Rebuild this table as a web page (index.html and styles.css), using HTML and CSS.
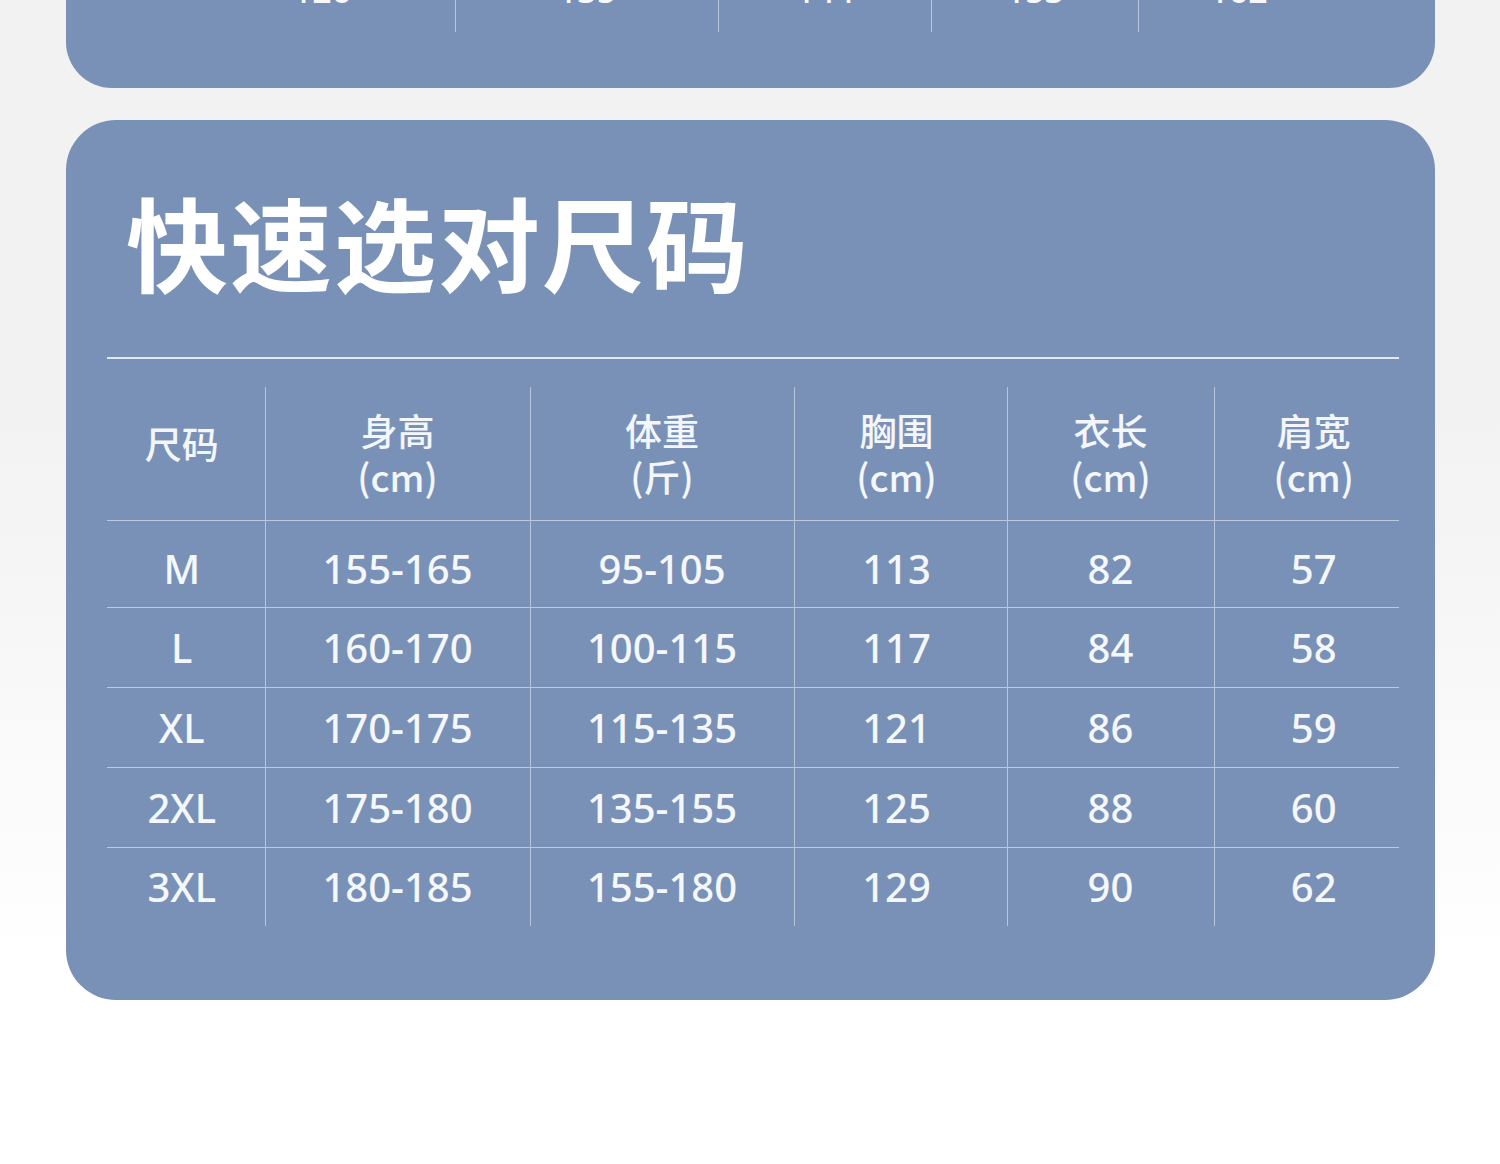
FILE: index.html
```html
<!DOCTYPE html>
<html lang="zh-CN">
<head>
<meta charset="utf-8">
<title>快速选对尺码</title>
<link rel="stylesheet" href="styles.css">
</head>
<body>
<div class="page">
  <section class="card card-top">
    <div class="top-row">
      <div class="top-spacer"></div>
      <div class="top-cell">126</div>
      <div class="top-cell sep">135</div>
      <div class="top-cell sep">144</div>
      <div class="top-cell sep">153</div>
      <div class="top-cell sep">162</div>
    </div>
  </section>

  <section class="card card-main">
    <h1 class="title">快速选对尺码</h1>
    <div class="rule"></div>
    <table class="size-table">
      <colgroup>
        <col class="c1"><col class="c2"><col class="c3"><col class="c4"><col class="c5"><col class="c6">
      </colgroup>
      <thead>
        <tr>
          <th class="single">尺码</th>
          <th>身高<br>(cm)</th>
          <th>体重<br>(斤)</th>
          <th>胸围<br>(cm)</th>
          <th>衣长<br>(cm)</th>
          <th>肩宽<br>(cm)</th>
        </tr>
      </thead>
      <tbody>
        <tr class="r1"><td>M</td><td>155-165</td><td>95-105</td><td>113</td><td>82</td><td>57</td></tr>
        <tr><td>L</td><td>160-170</td><td>100-115</td><td>117</td><td>84</td><td>58</td></tr>
        <tr><td>XL</td><td>170-175</td><td>115-135</td><td>121</td><td>86</td><td>59</td></tr>
        <tr><td>2XL</td><td>175-180</td><td>135-155</td><td>125</td><td>88</td><td>60</td></tr>
        <tr class="last"><td>3XL</td><td>180-185</td><td>155-180</td><td>129</td><td>90</td><td>62</td></tr>
      </tbody>
    </table>
  </section>
</div>
</body>
</html>
```

FILE: styles.css
```css
html, body {
  margin: 0;
  padding: 0;
}

body {
  width: 1500px;
  height: 1164px;
  overflow: hidden;
  background: linear-gradient(to bottom, #f2f2f2 0px, #f2f2f2 420px, #fbfbfb 800px, #ffffff 960px, #ffffff 100%);
  font-family: "Noto Sans", "Noto Sans CJK SC", sans-serif;
  color: #f6f8fb;
}

.page {
  padding: 0 65px 0 66px;
}

.card {
  background: #7a91b7;
}

/* top, partially visible card */
.card-top {
  margin-top: -48px;
  height: 136px;
  border-radius: 0 0 46px 46px;
  overflow: hidden;
}

.top-row {
  display: grid;
  grid-template-columns: 123px 266px 263px 213px 207px 200px;
  height: 80px;
}

.top-cell {
  display: flex;
  align-items: center;
  justify-content: center;
  font-size: 34px;
  font-weight: 500;
  line-height: 1;
  padding-bottom: 4px;
}

.top-cell.sep {
  border-left: 1.5px solid rgba(235, 240, 250, 0.55);
}

/* main card */
.card-main {
  margin-top: 32px;
  height: 880px;
  box-sizing: border-box;
  border-radius: 50px;
  padding: 61px 36px 0 41px;
}

.title {
  margin: 0;
  padding-left: 19px;
  height: 120px;
  line-height: 120px;
  font-family: "Noto Sans CJK SC", sans-serif;
  font-size: 102px;
  font-weight: 700;
  letter-spacing: 2px;
  color: #ffffff;
}

.rule {
  margin-top: 56px;
  height: 2px;
  background: #e3e9f4;
}

.size-table {
  margin-top: 28px;
  width: 1292px;
  border-collapse: collapse;
  table-layout: fixed;
}

.c1 { width: 158px; }
.c2 { width: 265px; }
.c3 { width: 264px; }
.c4 { width: 213px; }
.c5 { width: 207px; }
.c6 { width: 185px; }

.size-table th,
.size-table td {
  padding: 0;
  text-align: center;
  vertical-align: middle;
  border-left: 1.5px solid rgba(235, 240, 250, 0.55);
}

.size-table th:first-child,
.size-table td:first-child {
  border-left: none;
  padding-right: 8px;
}

.size-table th:nth-child(4),
.size-table td:nth-child(4) {
  padding-right: 8px;
}

.size-table th:nth-child(6),
.size-table td:nth-child(6) {
  padding-left: 14px;
}

.size-table th {
  height: 131px;
  padding-bottom: 2px;
  font-family: "Noto Sans CJK SC", sans-serif;
  font-size: 37px;
  font-weight: 500;
  line-height: 46px;
  color: #f3f6fb;
}

.size-table th.single {
  height: 111px;
  padding-bottom: 22px;
}

.size-table tbody tr {
  height: 80px;
  border-top: 1.5px solid rgba(235, 240, 250, 0.6);
}

.size-table tbody tr.r1 {
  height: 87px;
}

.size-table tbody tr.r1 td {
  padding-top: 10px;
}

.size-table tbody tr.last {
  height: 78px;
}

.size-table td {
  font-size: 40px;
  font-weight: 500;
  line-height: 1;
  color: #f4f7fb;
}
```
